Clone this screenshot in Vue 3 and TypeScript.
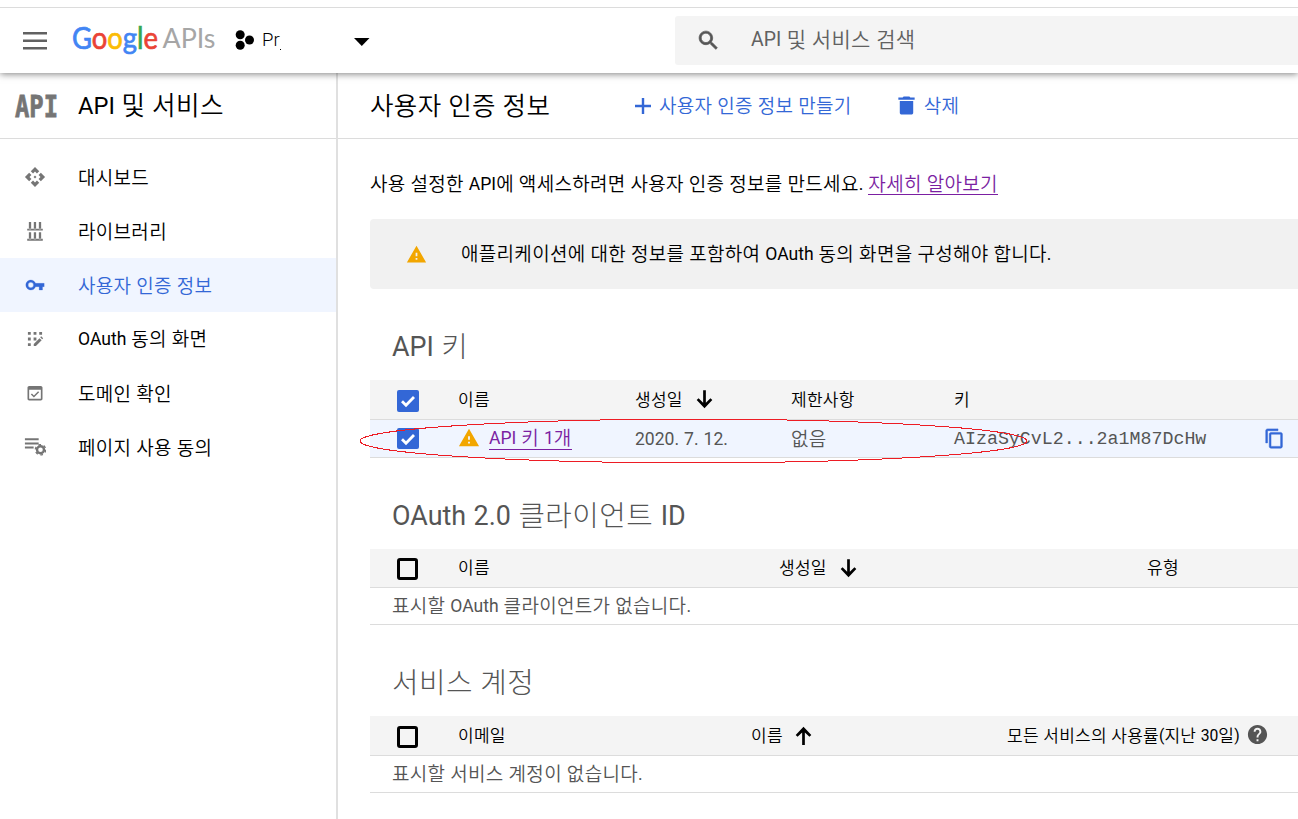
<script setup lang="ts">
import { h, type FunctionalComponent } from 'vue'

type IconName = keyof typeof icons

const icons = {
  search: 'M15.5 14h-.79l-.28-.27C15.41 12.59 16 11.11 16 9.5 16 5.91 13.09 3 9.5 3S3 5.91 3 9.5 5.91 16 9.5 16c1.61 0 3.09-.59 4.23-1.57l.27.28v.79l5 4.99L20.49 19l-4.99-5zm-6 0C7.01 14 5 11.99 5 9.5S7.01 5 9.5 5 14 7.01 14 9.5 11.99 14 9.5 14z',
  api: 'M13.600 12 12 13.600 10.400 12 12 10.400zM12 6l2.120 2.120 2.500-2.500L12 1 7.380 5.620l2.500 2.500zM6 12l2.120-2.120-2.500-2.500L1 12l4.620 4.620 2.500-2.500zM18 12l-2.120 2.120 2.500 2.500L23 12l-4.620-4.620-2.500 2.500zM12 18l-2.120-2.120-2.500 2.500L12 23l4.620-4.620-2.500-2.500z',
  library: 'M3.500 11.500h17v-2h-17zM5.300 2.300h2.500V10H5.300zM10.700 2.300h2.500V10h-2.500zM16.200 2.300h2.500V10h-2.500zM3.500 22.500h17v-2h-17zM5.300 13.300h2.500V21H5.300zM10.700 13.300h2.500V21h-2.500zM16.200 13.300h2.500V21h-2.500z',
  key: 'M12.650 10C11.830 7.670 9.610 6 7 6c-3.310 0-6 2.690-6 6s2.690 6 6 6c2.610 0 4.830-1.670 5.650-4H17v4h4v-4h2v-4H12.650zM7 15.200a3.200 3.200 0 1 1 0-6.400 3.200 3.200 0 0 1 0 6.400z',
  consent: 'M3.500 3.500h3.400v3.400H3.500zM10.300 3.500h3.400v3.400h-3.400zM17.100 3.500h3.400v3.400h-3.400zM3.500 10.300h3.400v3.400H3.500zM10.300 10.300h3.400v3.400h-3.400zM3.500 17.100h3.400v3.400H3.500zM10.500 20.500v-2.600l6.900-6.900 2.600 2.600-6.900 6.900zM18.200 10l1.200-1.200 2.400 2.400-1.200 1.200z',
  domain: 'M19 3.500H5c-1.100 0-2 .9-2 2V19c0 1.100.9 2 2 2h14c1.100 0 2-.9 2-2V5.500c0-1.100-.9-2-2-2zm0 15.500H5V8h14zM10.700 17.500l-3.700-3.600 1.300-1.300 2.400 2.300 5-5 1.300 1.300z',
  agreement: 'M1 2.500h15v2.200H1zM1 7h15v2.200H1zM1 11.500h9.500v2.200H1z',
  warning: 'M1 21h22L12 2 1 21zm12-3h-2v-2h2v2zm0-4h-2v-4h2v4z',
  down: 'M19.500 12.500l-1.800-1.800L13.300 15V3h-2.600v12l-4.400-4.300-1.800 1.800L12 20.500z',
  up: 'M4.500 11.500l1.800 1.800L10.700 9v12h2.600V9l4.400 4.300 1.800-1.800L12 3.500z',
  copy: 'M16 1H4c-1.100 0-2 .9-2 2v14h2V3h12V1zm3 4H8c-1.100 0-2 .9-2 2v14c0 1.100.9 2 2 2h11c1.100 0 2-.9 2-2V7c0-1.100-.9-2-2-2zm0 16H8V7h11v14z',
  trash: 'M5 19.500c0 1.100.9 2 2 2h10c1.100 0 2-.9 2-2V7.300H5zM20.500 3.600H16L15 2.500H9L8 3.600H3.500v2.500h17z',
  plus: 'M20 13.200h-6.800V20h-2.400v-6.800H4v-2.400h6.800V4h2.400v6.800H20z',
  help: 'M12 2C6.480 2 2 6.480 2 12s4.480 10 10 10 10-4.480 10-10S17.520 2 12 2zm1 17h-2v-2h2v2zm2.070-7.750l-.9.920C13.450 12.900 13 13.500 13 15h-2v-.5c0-1.100.450-2.100 1.170-2.830l1.240-1.260c.370-.360.590-.860.590-1.410 0-1.100-.9-2-2-2s-2 .9-2 2H8c0-2.210 1.790-4 4-4s4 1.790 4 4c0 .880-.360 1.680-.930 2.250z',
}

const Icon: FunctionalComponent<{ name: IconName }> = (props) =>
  h('svg', { viewBox: '0 0 24 24', fill: 'currentColor', class: 'icon' }, [
    h('path', { d: icons[props.name] }),
    props.name === 'agreement'
      ? h('g', { fill: 'none', stroke: 'currentColor' }, [
          h('circle', { cx: 18, cy: 15, r: 3.8, 'stroke-width': 2.6 }),
          h('circle', { cx: 18, cy: 15, r: 5.6, 'stroke-width': 1.6, 'stroke-dasharray': '2.9 2.96' }),
        ])
      : null,
  ])
Icon.props = ['name']

// Latin runs are set slightly smaller than the Hangul beside them.
const Mixed: FunctionalComponent<{ text: string }> = (props) =>
  h(
    'span',
    { class: 'mixed' },
    props.text
      .split(/([A-Za-z0-9.()]+)/)
      .filter(Boolean)
      .map((part) => (/^[A-Za-z0-9.()]/.test(part) ? h('span', { class: 'latin' }, part) : part)),
  )
Mixed.props = ['text']

const menu: { icon: IconName; label: string; active?: boolean }[] = [
  { icon: 'api', label: '대시보드' },
  { icon: 'library', label: '라이브러리' },
  { icon: 'key', label: '사용자 인증 정보', active: true },
  { icon: 'consent', label: 'OAuth 동의 화면' },
  { icon: 'domain', label: '도메인 확인' },
  { icon: 'agreement', label: '페이지 사용 동의' },
]
</script>

<template>
  <div class="page">
    <header class="topbar">
      <svg class="burger" width="24" height="18" viewBox="0 0 24 18">
        <path d="M0 0h24v2.400H0zM0 7.500h24v2.400H0zM0 15h24v2.400H0z" />
      </svg>
      <svg class="logo" width="146" height="52" viewBox="0 -6 146 52">
        <text class="google" x="0" y="27.500" textLength="86" lengthAdjust="spacingAndGlyphs"><tspan class="b">G</tspan><tspan class="r">o</tspan><tspan class="y">o</tspan><tspan class="b">g</tspan><tspan class="g">l</tspan><tspan class="r">e</tspan></text>
        <text class="apis" x="90.500" y="26.500" textLength="53" lengthAdjust="spacingAndGlyphs">APIs</text>
      </svg>
      <svg class="project-icon" width="20" height="20" viewBox="0 0 20 20">
        <circle cx="5.200" cy="4.800" r="4.500" /><circle cx="14.500" cy="10" r="4.500" /><circle cx="5.200" cy="15.200" r="4.500" />
      </svg>
      <div class="project">Pr</div>
      <svg class="caret" width="16" height="8" viewBox="0 0 16 8"><path d="M0 0h15.500L7.750 8z" /></svg>
      <div class="search">
        <Icon name="search" />
        <Mixed text="API 및 서비스 검색" />
      </div>
    </header>

    <div class="body">
      <aside class="sidebar">
        <div class="side-title">
          <svg width="43" height="40" viewBox="0 -7 43 40">
            <text x="0" y="23.500" textLength="43" lengthAdjust="spacingAndGlyphs">API</text>
          </svg>
          <Mixed text="API 및 서비스" />
        </div>
        <nav>
          <a v-for="item in menu" :key="item.label" :class="['item', item.icon, { active: item.active }]">
            <Icon :name="item.icon" />
            <Mixed :text="item.label" />
          </a>
        </nav>
      </aside>

      <main class="main">
        <div class="toolbar">
          <h1><Mixed text="사용자 인증 정보" /></h1>
          <button class="create"><Icon name="plus" /><Mixed text="사용자 인증 정보 만들기" /></button>
          <button class="delete"><Icon name="trash" /><Mixed text="삭제" /></button>
        </div>

        <div class="content">
          <p class="intro">
            <Mixed text="사용 설정한 API에 액세스하려면 사용자 인증 정보를 만드세요." />
            <a class="link"><Mixed text="자세히 알아보기" /></a>
          </p>
          <div class="banner">
            <Icon name="warning" />
            <Mixed text="애플리케이션에 대한 정보를 포함하여 OAuth 동의 화면을 구성해야 합니다." />
          </div>

          <section class="keys">
            <h2><Mixed text="API 키" /></h2>
            <div class="row head">
              <span class="box on"><svg viewBox="0 0 22 22"><path d="M5 11.200l4 4 8-8.200" /></svg></span>
              <Mixed text="이름" />
              <span class="sort"><Mixed text="생성일" /><Icon name="down" /></span>
              <Mixed text="제한사항" />
              <Mixed text="키" />
            </div>
            <div class="row selected">
              <span class="box on"><svg viewBox="0 0 22 22"><path d="M5 11.200l4 4 8-8.200" /></svg></span>
              <span class="name"><Icon name="warning" /><a class="link"><Mixed text="API 키 1개" /></a></span>
              <Mixed text="2020. 7. 12." />
              <Mixed text="없음" />
              <code>AIzaSyCvL2...2a1M87DcHw</code>
              <Icon class="copy" name="copy" />
              <svg class="mark" width="670" height="46" viewBox="0 0 670 46"><ellipse cx="334.500" cy="23" rx="333.500" ry="21.800" /></svg>
            </div>
          </section>

          <section class="clients">
            <h2><Mixed text="OAuth 2.0 클라이언트 ID" /></h2>
            <div class="row head">
              <span class="box"></span>
              <Mixed text="이름" />
              <span class="sort"><Mixed text="생성일" /><Icon name="down" /></span>
              <Mixed text="유형" />
            </div>
            <div class="empty"><Mixed text="표시할 OAuth 클라이언트가 없습니다." /></div>
          </section>

          <section class="accounts">
            <h2><Mixed text="서비스 계정" /></h2>
            <div class="row head">
              <span class="box"></span>
              <Mixed text="이메일" />
              <span class="sort"><Mixed text="이름" /><Icon name="up" /></span>
              <span class="usage"><Mixed text="모든 서비스의 사용률(지난 30일)" /><Icon name="help" /></span>
            </div>
            <div class="empty"><Mixed text="표시할 서비스 계정이 없습니다." /></div>
          </section>
        </div>
      </main>
    </div>
  </div>
</template>

<style>
body { background: #fff; }
.mixed { display: inline-block; padding-top: 2px; white-space: pre; letter-spacing: 0.016em; }
.mixed .latin { position: relative; top: -1px; font-size: 0.925em; font-weight: 400; letter-spacing: 0; }
h2 .mixed .latin { font-size: 0.935em; }
.icon { display: block; flex: none; }
</style>

<style scoped>
.page {
  box-sizing: border-box;
  width: 1298px;
  height: 819px;
  padding-top: 7px;
  overflow: hidden;
  display: flex;
  flex-direction: column;
  color: #000;
  font: 350 19px/1 Roboto, "Noto Sans CJK KR", sans-serif;
}
.topbar {
  position: relative;
  z-index: 2;
  flex: none;
  box-sizing: border-box;
  height: 66px;
  border-top: 1px solid #dcdcdc;
  display: flex;
  align-items: center;
  background: #fff;
  box-shadow: 0 1px 7px rgba(0, 0, 0, 0.5);
  clip-path: inset(0 0 -12px 0);
}
.burger { margin-left: 23px; fill: #616161; }
.logo { margin-left: 25px; overflow: visible; }
.google { font: 400 31px Lato, sans-serif; stroke-width: 0.7; }
.apis { font: 400 26px Lato, sans-serif; fill: #a6a6a6; }
.b { fill: #4285f4; stroke: #4285f4; }
.r { fill: #ea4335; stroke: #ea4335; }
.y { fill: #fbbc05; stroke: #fbbc05; }
.g { fill: #34a853; stroke: #34a853; }
.project-icon { margin: -1px 0 0 17px; }
.project { position: relative; width: 92px; margin-left: 7px; font-size: 18.500px; }
.project::after { content: ""; position: absolute; left: 18px; top: 18px; width: 1px; height: 1px; background: #000; }
.caret { margin-top: 2px; }
.search {
  flex: 1;
  height: 49px;
  margin-left: 305px;
  display: flex;
  align-items: center;
  border-radius: 3px 0 0 3px;
  background: #f4f4f4;
  color: #616161;
  font-size: 21px;
}
.search .icon { width: 25px; height: 25px; margin: 0 30px 0 21px; color: #555; stroke: currentColor; stroke-width: 0.7; }
.search .mixed { padding-top: 0; }

.body { flex: 1; display: flex; min-height: 0; }
.sidebar { width: 336px; flex: none; border-right: 2px solid #e0e0e0; }
.side-title {
  box-sizing: border-box;
  height: 66px;
  border-bottom: 1px solid #dcdcdc;
  display: flex;
  align-items: center;
  gap: 20px;
  padding-left: 15px;
  font-size: 25.600px;
}
.side-title svg { overflow: visible; }
.side-title .mixed, h1 .mixed { padding-top: 2px; }
.side-title text { font: 700 31px "DejaVu Sans Mono", monospace; fill: #757575; stroke: #757575; stroke-width: 0.8; }
nav { padding-top: 11px; }
.item { height: 54px; display: flex; align-items: center; gap: 31px; padding-left: 23px; }
.item .icon { box-sizing: border-box; width: 24px; height: 24px; padding: 1px; color: #757575; }
.item.key .icon { padding: 2px; }
.item.consent .icon, .item.domain .icon { padding: 2px; }
.item.active { background: #f0f5ff; color: #3367d6; }
.item.active .icon { color: #3367d6; stroke: currentColor; stroke-width: 0.3; }

.main { flex: 1; min-width: 0; }
.toolbar {
  box-sizing: border-box;
  height: 66px;
  border-bottom: 1px solid #dcdcdc;
  display: flex;
  align-items: center;
  padding-left: 32px;
}
h1, h2, p { margin: 0; font-weight: inherit; }
h1 { width: 262px; font-size: 25.500px; }
button { display: flex; align-items: center; padding: 0; border: 0; background: none; font: inherit; color: #3367d6; }
button .icon { width: 24px; height: 24px; }
.create { gap: 4px; margin-left: -1px; }
.delete { gap: 6px; margin-left: 43px; }
.delete .icon { width: 23px; height: 23px; }

.content { padding-left: 32px; }
.intro { height: 80px; padding-top: 10px; box-sizing: border-box; display: flex; align-items: center; gap: 5px; }
.link { color: #7b1fa2; border-bottom: 1px solid #7b1fa2; }
.banner { height: 70px; display: flex; align-items: center; border-radius: 4px 0 0 4px; background: #f1f1f1; }
.banner .icon { width: 21px; height: 21px; margin: 0 34px 0 36px; color: #f2a600; }

h2 { padding-left: 22px; font-weight: 300; font-size: 28.800px; color: #555; box-sizing: border-box; height: 91px; padding-top: 42px; }
.row { display: grid; align-items: center; box-sizing: border-box; border-bottom: 1px solid #dcdcdc; }
.head { height: 40px; background: #f4f4f4; font-size: 17px; }
.clients .head { height: 39px; }
.clients .head .mixed { padding-top: 0; }
.selected { position: relative; height: 38px; background: #f0f5ff; color: #555; }
.keys .row { grid-template-columns: 88px 177px 156px 163px 310px 1fr; }
.clients .row { grid-template-columns: 88px 321px 368px 1fr; }
.accounts .row { grid-template-columns: 88px 293px 256px 1fr; }
.empty { box-sizing: border-box; height: 37px; padding-left: 22px; display: flex; align-items: center; color: #555; border-bottom: 1px solid #dcdcdc; }
.box { box-sizing: border-box; width: 21px; height: 22px; margin: 3px 0 0 27px; border: 3px solid #000; border-radius: 3px; }
.clients .box { margin-top: 1px; }
.box.on { width: 22px; border: 0; background: #3367d6; border-radius: 2px; }
.selected .box { height: 21px; margin-top: 0; }
.box svg { display: block; width: 22px; height: 22px; fill: none; stroke: #fff; stroke-width: 2.800; }
.sort { display: flex; align-items: center; gap: 9px; }
.sort .icon { width: 25px; height: 25px; }
.accounts .sort .icon { margin-left: -1px; }
.name { display: flex; align-items: center; gap: 9px; }
.name .icon { width: 22px; height: 22px; color: #f2a600; }
code { font: 400 18.300px "Liberation Mono", monospace; }
.copy { width: 21px; height: 21px; color: #3367d6; stroke: currentColor; stroke-width: 0.6; }
.usage { display: flex; align-items: center; gap: 6px; }
.usage .icon { width: 23px; height: 23px; margin-top: -2px; color: #555; }
.mark { position: absolute; left: -11px; top: -2px; fill: none; stroke: #ed1c24; shape-rendering: crispEdges; }
</style>
